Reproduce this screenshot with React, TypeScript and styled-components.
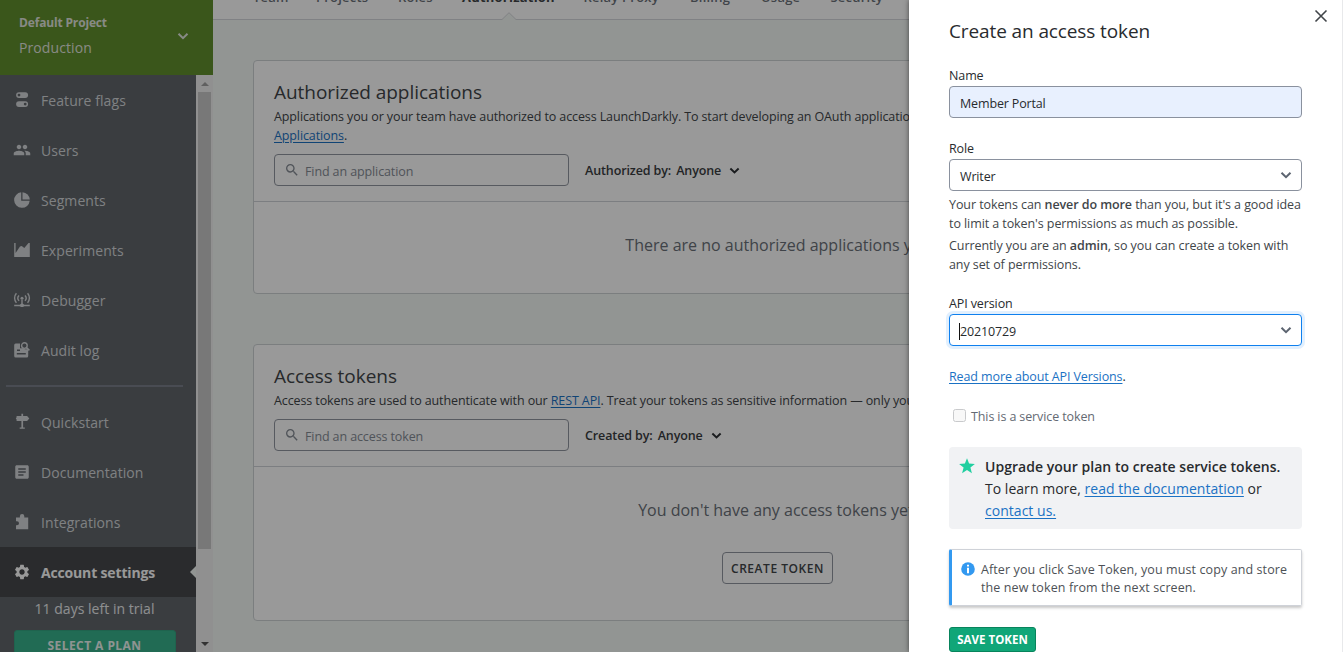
import React from "react";
import styled, { createGlobalStyle } from "styled-components";
import { MdPeople, MdSettings, MdArticle, MdSearch } from "react-icons/md";

const GlobalStyle = createGlobalStyle`
  *, *::before, *::after { box-sizing: border-box; }
  body {
    margin: 0;
    overflow: hidden;
    font-family: "Open Sans", "Noto Sans", sans-serif;
    font-size: 12.5px;
    letter-spacing: -0.11px;
    color: #414549;
  }
  h2, p { margin: 0; font-weight: 400; }
`;

const Page = styled.div`
  position: relative;
  display: flex;
  width: 1343px;
  height: 652px;
  overflow: hidden;
  background: #f4f8f6;
`;

/* Sidebar */
const Side = styled.aside`
  flex: none;
  width: 213px;
  display: flex;
  flex-direction: column;
`;
const Project = styled.div`
  height: 75px;
  padding: 13px 24px 0 19px;
  background: #618f2d;
  color: #e2e6df;
  display: flex;
  justify-content: space-between;
`;
const ProjectName = styled.div`
  font-size: 12px;
  font-weight: 700;
  letter-spacing: -0.16px;
  line-height: 20px;
`;
const EnvName = styled.div`
  font-size: 14px;
  letter-spacing: 0.1px;
  line-height: 30px;
`;
const ProjectArrow = styled.div`
  padding-top: 17px;
  line-height: 0;
`;
const SideBody = styled.div`
  flex: 1;
  min-height: 0;
  display: flex;
`;
const Nav = styled.nav`
  width: 196px;
  background: #62676c;
  overflow: hidden;
`;
const Item = styled.div<{ $active?: boolean }>`
  position: relative;
  height: 50px;
  padding-left: 13px;
  display: flex;
  align-items: center;
  gap: 10px;
  font-size: 14px;
  letter-spacing: ${(p) => (p.$active ? "-0.16px" : "0.07px")};
  font-weight: ${(p) => (p.$active ? 700 : 400)};
  color: ${(p) => (p.$active ? "#fff" : "#d4d7da")};
  background: ${(p) => (p.$active ? "#47494c" : "transparent")};
  svg { flex: none; }
`;
const Pointer = styled.i`
  position: absolute;
  right: 0;
  top: 19px;
  border: 6px solid transparent;
  border-left: 0;
  border-right-color: #f4f8f6;
`;
const Rule = styled.div`
  height: 2px;
  margin: 10px 13px 10px 6px;
  background: #7b7f8a;
`;
const Trial = styled.div`
  height: 33px;
  padding: 0 7px 10px 0;
  display: flex;
  align-items: center;
  justify-content: center;
  font-size: 14px;
  letter-spacing: 0.03px;
  color: #eceef0;
`;
const PlanButton = styled.div`
  width: 162px;
  height: 32px;
  margin-left: 13.5px;
  border: 1px solid #35a582;
  border-radius: 3px;
  background: #38b28c;
  color: #eef7f3;
  text-align: center;
  font-size: 12px;
  font-weight: 700;
  letter-spacing: 0.44px;
  line-height: 30px;
`;
const Scrollbar = styled.div`
  width: 17px;
  background: #f1f1f1;
  display: flex;
  flex-direction: column;
  align-items: center;
`;
const ScrollArrow = styled.div`
  height: 17px;
  display: flex;
  align-items: center;
`;
const Thumb = styled.div`
  width: 13px;
  height: 457px;
  margin-bottom: auto;
  background: #c8c8c8;
`;

/* Main column */
const Main = styled.main`
  flex: 1;
  min-width: 0;
`;
const Tabs = styled.div`
  position: relative;
  height: 20px;
  padding-left: 40px;
  display: flex;
  align-items: flex-end;
  gap: 28.5px;
  background: #fff;
  border-bottom: 1px solid #d6d8dc;
`;
const Tab = styled.div<{ $on?: boolean; $w: number }>`
  flex: none;
  width: ${(p) => p.$w}px;
  height: 31px;
  font-size: 13px;
  letter-spacing: 0.22px;
  line-height: 18px;
  font-weight: ${(p) => (p.$on ? 700 : 600)};
  color: ${(p) => (p.$on ? "#414549" : "#6c727a")};
  white-space: nowrap;
`;
const Notch = styled.svg`
  position: absolute;
  left: 289px;
  top: 12px;
`;
const Panels = styled.div`
  padding: 40px 40px 0;
  display: flex;
  flex-direction: column;
  gap: 50px;
`;
const Panel = styled.section<{ $h: number }>`
  height: ${(p) => p.$h}px;
  border: 1px solid #cdd3d4;
  border-radius: 4px;
  background: #fff;
`;
const PanelHead = styled.div`
  padding: 18px 20px 15px;
  border-bottom: 1px solid #cfd2d8;
`;
const Heading = styled.h2`
  font-size: 19px;
  letter-spacing: -0.045px;
  line-height: 26px;
`;
const Blurb = styled.p`
  margin-top: 2px;
  line-height: 19px;
  white-space: nowrap;
  letter-spacing: -0.11px;
`;
const Link = styled.a`
  color: #1b72c4;
  text-decoration: underline;
  text-underline-offset: 2px;
`;
const Filters = styled.div`
  margin-top: 9px;
  display: flex;
  align-items: center;
`;
const SearchBox = styled.div`
  width: 295px;
  height: 32px;
  padding: 2px 0 0 9px;
  border: 1px solid #9196a0;
  border-radius: 4px;
  display: flex;
  align-items: center;
  gap: 5px;
  color: #868c95;
  svg { position: relative; top: -1px; }
`;
const Filter = styled.div`
  margin-left: 16px;
  display: flex;
  align-items: center;
  font-weight: 600;
  color: #3a3d41;
  svg { margin-left: 8px; }
`;
const FilterValue = styled.span`
  margin-left: 5px;
`;
const Empty = styled.div`
  padding-top: 30px;
  text-align: center;
  font-size: 16px;
  letter-spacing: 0;
  line-height: 26px;
  color: #6a7078;
`;
const CreateButton = styled.div`
  width: 111px;
  height: 32px;
  margin: 29px 0 0 468px;
  border: 1px solid #9196a0;
  border-radius: 4px;
  text-align: center;
  font-size: 12px;
  font-weight: 600;
  letter-spacing: 0.54px;
  line-height: 31px;
`;

const Backdrop = styled.div`
  position: absolute;
  inset: 0;
  background: rgba(0, 0, 0, 0.4);
`;

/* Drawer */
const Drawer = styled.section`
  position: absolute;
  top: 0;
  right: 0;
  width: 434px;
  height: 652px;
  padding: 18px 40px 0 40px;
  background: #fff;
  border-right: 1px solid #e8e9eb;
  box-shadow: 0 0 5px rgba(0, 0, 0, 0.55);
  color: #282b2e;
`;
const Close = styled.svg`
  position: absolute;
  left: 405px;
  top: 9px;
`;
const Title = styled(Heading)`
  letter-spacing: -0.11px;
`;
const Label = styled.div<{ $top: number }>`
  margin-top: ${(p) => p.$top}px;
  height: 20px;
  line-height: 19px;
`;
const Field = styled.div<{ $fill?: boolean; $focus?: boolean }>`
  height: 32px;
  padding: 3px 9px 0 10px;
  display: flex;
  align-items: center;
  justify-content: space-between;
  border: 1px solid ${(p) => (p.$focus ? "#0f80ee" : "#8a919e")};
  border-radius: 4px;
  background: ${(p) => (p.$fill ? "#e8f0fe" : "#fff")};
  box-shadow: ${(p) => (p.$focus ? "0 0 0 3px #e2f0fe" : "none")};
  svg { position: relative; top: -1.5px; }
`;
const Value = styled.span<{ $caret?: boolean }>`
  letter-spacing: -0.15px;
  box-shadow: ${(p) => (p.$caret ? "-1px 0 0 #111" : "none")};
  line-height: 17px;
`;
const Help = styled.p`
  padding-top: 3px;
  line-height: 19px;
  letter-spacing: -0.08px;
  color: #414549;
  white-space: nowrap;
  b { font-weight: 600; }
  &:first-of-type { padding-top: 4px; }
`;
const More = styled.p`
  margin-top: 21px;
  line-height: 19px;
`;
const CheckRow = styled.div`
  height: 20px;
  margin-top: 20px;
  padding-left: 4px;
  display: flex;
  align-items: center;
  gap: 5px;
  color: #646a73;
`;
const Check = styled.span`
  width: 13px;
  height: 13px;
  margin-bottom: 1px;
  border: 1px solid #c9cacc;
  border-radius: 2.5px;
  background: #f8f8f8;
`;
const Upgrade = styled.div`
  height: 82px;
  margin-top: 21px;
  padding: 9px 0 0 9px;
  display: flex;
  gap: 9px;
  border-radius: 4px;
  background: #f1f2f4;
  font-size: 14px;
  letter-spacing: 0.03px;
  line-height: 22px;
  white-space: nowrap;
  b { font-weight: 600; }
  svg { margin-top: 1px; }
`;
const Note = styled.div`
  height: 57px;
  margin-top: 20px;
  padding: 11px 0 0 9px;
  display: flex;
  gap: 6px;
  border: 1px solid #cfd2d8;
  border-left: 3px solid #3399f0;
  border-radius: 2px;
  box-shadow: 0 2px 3px rgba(0, 0, 0, 0.22);
  font-weight: 500;
  letter-spacing: 0.1px;
  line-height: 18px;
  color: #4d5156;
  white-space: nowrap;
  svg { margin-top: 1px; }
`;
const Save = styled.div`
  width: 87px;
  height: 25px;
  margin-top: 21px;
  border: 1px solid #08845c;
  border-radius: 3px;
  background: #10a678;
  color: #fff;
  text-align: center;
  font-size: 11.5px;
  font-weight: 700;
  letter-spacing: 0.02px;
  line-height: 24px;
`;

const Chevron = ({ color = "#5c6470", w = 12, s = 2 }: { color?: string; w?: number; s?: number }) => (
  <svg width={w} height={w} viewBox="0 0 12 12" fill="none" stroke={color} strokeWidth={s}>
    <path d="M1.5 3.8 6 8.2l4.500-4.400" />
  </svg>
);
const Icon = ({ children }: { children: React.ReactNode }) => (
  <svg width="18" height="18" viewBox="0 0 18 18" fill="currentColor">
    {children}
  </svg>
);
const FlagsIcon = () => (
  <Icon>
    <path fillRule="evenodd" d="M6 1.200h6.200a2.900 2.900 0 0 1 0 5.800H6a2.900 2.900 0 0 1 0-5.800Zm0 1.500a1.400 1.400 0 1 0 0 2.800 1.400 1.400 0 0 0 0-2.800ZM6 10.200h6.200a2.900 2.900 0 0 1 0 5.800H6a2.900 2.900 0 0 1 0-5.800Zm6.200 1.500a1.400 1.400 0 1 0 0 2.800 1.400 1.400 0 0 0 0-2.800Z" />
  </Icon>
);
const SegmentsIcon = () => (
  <Icon>
    <path d="M8.200 1.300V9.800h8.500A7.800 7.800 0 1 1 8.200 1.300Z" />
    <path d="M9.500 1.200a7.800 7.800 0 0 1 7.300 7.300H9.500Z" />
  </Icon>
);
const ExperimentsIcon = () => (
  <Icon>
    <path d="M1.200 2h1.400v10l4.400-6.500 1.700-.4 2.600 1.900L15.500 2h1.300v14H1.200Z" />
  </Icon>
);
const DebuggerIcon = () => (
  <Icon>
    <circle cx="9" cy="7.200" r="1.500" />
    <path d="M8.300 9h1.400v3.500l1.500 1.200h5.600v1.500h-5.400L9.900 16H8.100l-1.500-.800H1.200v-1.500h5.600l1.500-1.200Z" />
    <g fill="none" stroke="currentColor" strokeWidth="1.400">
      <path d="M6 4.500a4 4 0 0 0 0 5.400M12 4.500a4 4 0 0 1 0 5.400M3.400 2.300a7.300 7.300 0 0 0 0 9.600M14.600 2.300a7.300 7.300 0 0 1 0 9.600" />
    </g>
  </Icon>
);
const AuditIcon = () => (
  <Icon>
    <path fillRule="evenodd" d="M2.700 2.500H7v4.700h3.300l1.600 1h3.300V15a1.500 1.500 0 0 1-1.500 1.500h-11A1.500 1.500 0 0 1 1.200 15V4a1.500 1.500 0 0 1 1.500-1.500ZM4 8.600v1.300h3V8.600ZM3.800 12v1.400h9V12Z" />
    <circle cx="11.400" cy="4.600" r="2.800" fill="none" stroke="currentColor" strokeWidth="1.400" />
    <path d="m13.400 6.600 3 2.800" stroke="currentColor" strokeWidth="1.600" />
  </Icon>
);
const SignIcon = () => (
  <Icon>
    <path d="M8.400.8h1.700v2.100h4l2.200 2.500-2.200 2.500h-4v6.500h1.700v1.400H6.700v-1.400h1.700V7.900H3.600V6.600L2.800 5.400l.8-1.200V2.900h4.800Z" />
  </Icon>
);
const PuzzleIcon = () => (
  <Icon>
    <path d="M3 4.500h3.900v-1.300a2.200 2.200 0 1 1 4.400 0v1.300h3.900v11.800H3v-4h1a2 2 0 1 0 0-4H3Z" />
  </Icon>
);

const items: [string, React.ReactNode][] = [
  ["Feature flags", <FlagsIcon />],
  ["Users", <MdPeople size={18} />],
  ["Segments", <SegmentsIcon />],
  ["Experiments", <ExperimentsIcon />],
  ["Debugger", <DebuggerIcon />],
  ["Audit log", <AuditIcon />],
];
const lowerItems: [string, React.ReactNode][] = [
  ["Quickstart", <SignIcon />],
  ["Documentation", <MdArticle size={18} />],
  ["Integrations", <PuzzleIcon />],
];
const tabs: [string, number][] = [
  ["Team", 34.5],
  ["Projects", 53.5],
  ["Roles", 35.5],
  ["Authorization", 93],
  ["Relay Proxy", 78],
  ["Billing", 42.5],
  ["Usage", 41],
  ["Security", 54],
];

export default function App() {
  return (
    <Page>
      <GlobalStyle />
      <Side>
        <Project>
          <div>
            <ProjectName>Default Project</ProjectName>
            <EnvName>Production</EnvName>
          </div>
          <ProjectArrow>
            <Chevron color="#e2e6df" w={12} />
          </ProjectArrow>
        </Project>
        <SideBody>
          <Nav>
            {items.map(([name, icon]) => (
              <Item key={name}>{icon}{name}</Item>
            ))}
            <Rule />
            {lowerItems.map(([name, icon]) => (
              <Item key={name}>{icon}{name}</Item>
            ))}
            <Item $active>
              <MdSettings size={18} />
              Account settings
              <Pointer />
            </Item>
            <Trial>11 days left in trial</Trial>
            <PlanButton>SELECT A PLAN</PlanButton>
          </Nav>
          <Scrollbar>
            <ScrollArrow>
              <svg width="8" height="4"><path d="M0 4 4 0l4 4Z" fill="#a0a0a0" /></svg>
            </ScrollArrow>
            <Thumb />
            <ScrollArrow>
              <svg width="8" height="4"><path d="M0 0h8L4 4Z" fill="#555" /></svg>
            </ScrollArrow>
          </Scrollbar>
        </SideBody>
      </Side>
      <Main>
        <Tabs>
          {tabs.map(([name, w]) => (
            <Tab key={name} $w={w} $on={name === "Authorization"}>{name}</Tab>
          ))}
          <Notch width="14" height="9" viewBox="0 0 14 9">
            <path d="M0 7.500 7 .700l7 6.800V9H0Z" fill="#f4f8f6" />
            <path d="M0 7.500 7 .700l7 6.800" fill="none" stroke="#d6d8dc" />
          </Notch>
        </Tabs>
        <Panels>
          <Panel $h={234}>
            <PanelHead>
              <Heading>Authorized applications</Heading>
              <Blurb>
                Applications you or your team have authorized to access LaunchDarkly. To start developing an OAuth application, go to
                <br />
                <Link>Applications</Link>.
              </Blurb>
              <Filters>
                <SearchBox><MdSearch size={16} />Find an application</SearchBox>
                <Filter>Authorized by: <FilterValue>Anyone</FilterValue><Chevron color="#2c2f33" w={11} s={2.1} /></Filter>
              </Filters>
            </PanelHead>
            <Empty>There are no authorized applications yet.</Empty>
          </Panel>
          <Panel $h={277}>
            <PanelHead>
              <Heading>Access tokens</Heading>
              <Blurb>
                Access tokens are used to authenticate with our <Link>REST API</Link>. Treat your tokens as sensitive information — only you can see them.
              </Blurb>
              <Filters>
                <SearchBox><MdSearch size={16} />Find an access token</SearchBox>
                <Filter>Created by: <FilterValue>Anyone</FilterValue><Chevron color="#2c2f33" w={11} s={2.1} /></Filter>
              </Filters>
            </PanelHead>
            <Empty>You don't have any access tokens yet.</Empty>
            <CreateButton>CREATE TOKEN</CreateButton>
          </Panel>
        </Panels>
      </Main>
      <Backdrop />
      <Drawer>
        <Close width="14" height="14" viewBox="0 0 14 14" stroke="#414549" strokeWidth="1.600">
          <path d="m1.500 1.500 11 11M12.500 1.500l-11 11" />
        </Close>
        <Title>Create an access token</Title>
        <Label $top={22}>Name</Label>
        <Field $fill><Value>Member Portal</Value></Field>
        <Label $top={21}>Role</Label>
        <Field><Value>Writer</Value><Chevron /></Field>
        <Help>
          Your tokens can <b>never do more</b> than you, but it's a good idea
          <br />
          to limit a token's permissions as much as possible.
        </Help>
        <Help>
          Currently you are an <b>admin</b>, so you can create a token with
          <br />
          any set of permissions.
        </Help>
        <Label $top={20}>API version</Label>
        <Field $focus><Value $caret>20210729</Value><Chevron /></Field>
        <More><Link>Read more about API Versions</Link>.</More>
        <CheckRow><Check />This is a service token</CheckRow>
        <Upgrade>
          <svg width="18" height="18" viewBox="0 0 18 18" fill="#21cfa0">
            <path d="m9 1.200 2.100 5.400 5.800.3-4.500 3.700 1.500 5.600L9 13l-4.900 3.200 1.500-5.600L1.100 6.900l5.800-.3Z" />
          </svg>
          <div>
            <b>Upgrade your plan to create service tokens.</b>
            <br />
            To learn more, <Link>read the documentation</Link> or
            <br />
            <Link>contact us.</Link>
          </div>
        </Upgrade>
        <Note>
          <svg width="14" height="14" viewBox="0 0 14 14">
            <circle cx="7" cy="7" r="6.800" fill="#3399f0" />
            <path d="M6 2.800h2v1.800H6ZM6 5.800h2v5.400H6Z" fill="#fff" />
          </svg>
          <div>
            After you click Save Token, you must copy and store
            <br />
            the new token from the next screen.
          </div>
        </Note>
        <Save>SAVE TOKEN</Save>
      </Drawer>
    </Page>
  );
}
